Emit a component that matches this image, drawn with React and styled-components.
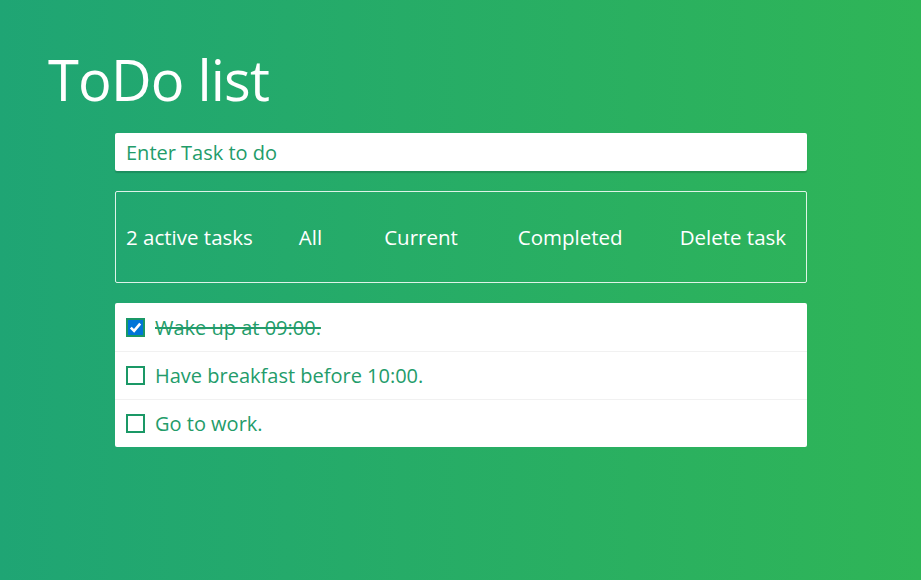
import React, { useState } from 'react';
import styled, { createGlobalStyle } from 'styled-components';

const GlobalStyle = createGlobalStyle`
  html, body {
    margin: 0;
    padding: 0;
  }
  body {
    min-height: 580px;
    background: linear-gradient(to right, #1fa574, #2fb557);
    font-family: "Open Sans", "Noto Sans", sans-serif;
  }
`;

const initialTasks = [
  { id: 1, text: 'Wake up at 09:00.', done: true },
  { id: 2, text: 'Have breakfast before 10:00.', done: false },
  { id: 3, text: 'Go to work.', done: false }
];

const App = () => {
  const [tasks, setTasks] = useState(initialTasks);
  const activeCount = tasks.filter(t => !t.done).length;

  const toggle = id => {
    setTasks(tasks.map(t => (t.id === id ? { ...t, done: !t.done } : t)));
  };

  return (
    <>
      <GlobalStyle />
      <SCPage>
        <SCTitle>ToDo list</SCTitle>
        <SCBody>
          <SCInput placeholder="Enter Task to do" />
          <SCFilterBar>
            <SCFilterItem>{activeCount} active tasks</SCFilterItem>
            <SCFilterItem $gap={46}>All</SCFilterItem>
            <SCFilterItem $gap={62}>Current</SCFilterItem>
            <SCFilterItem $gap={60}>Completed</SCFilterItem>
            <SCFilterItem $gap={57}>Delete task</SCFilterItem>
          </SCFilterBar>
          <SCList>
            {tasks.map(task => (
              <SCRow key={task.id}>
                <SCCheck $checked={task.done} onClick={() => toggle(task.id)}>
                  {task.done && (
                    <svg width="13" height="13" viewBox="0 0 13 13">
                      <path d="M1.8 6.6 L5.1 9.9 L11.2 2.6" fill="none" stroke="#fff" strokeWidth="2.6" />
                    </svg>
                  )}
                </SCCheck>
                <SCTaskText $done={task.done}>{task.text}</SCTaskText>
              </SCRow>
            ))}
          </SCList>
        </SCBody>
      </SCPage>
    </>
  );
};

const SCPage = styled.div`
  padding: 46px 48px;
`;

const SCTitle = styled.h1`
  margin: 0 0 20px 0;
  font-size: 56px;
  font-weight: 400;
  line-height: 1.2;
  color: #fff;
  letter-spacing: -0.8px;
`;

const SCBody = styled.div`
  width: 692px;
  margin-left: 67px;
  display: flex;
  flex-direction: column;
`;

const SCInput = styled.input`
  box-sizing: border-box;
  height: 38px;
  padding: 0 11px;
  border: none;
  border-radius: 2px;
  background: #fff;
  box-shadow: 0 2px 1px rgba(0, 0, 0, 0.15);
  font-family: inherit;
  font-size: 20px;
  color: #239c6a;
  outline: none;

  &::placeholder {
    color: #239c6a;
  }
`;

const SCFilterBar = styled.div`
  box-sizing: border-box;
  height: 92px;
  margin-top: 20px;
  padding: 0 10px;
  border: 1px solid rgba(255, 255, 255, 0.85);
  border-radius: 2px;
  display: flex;
  align-items: center;
`;

const SCFilterItem = styled.span`
  margin-left: ${p => p.$gap || 0}px;
  font-size: 20.5px;
  color: #fff;
  white-space: nowrap;
  cursor: pointer;
`;

const SCList = styled.div`
  margin-top: 20px;
  background: #fff;
  border-radius: 2px;
  display: flex;
  flex-direction: column;
`;

const SCRow = styled.div`
  box-sizing: border-box;
  height: 48px;
  padding: 0 11px;
  display: flex;
  align-items: center;
  gap: 10px;

  & + & {
    border-top: 1px solid #f1f1f1;
  }
`;

const SCCheck = styled.span`
  box-sizing: border-box;
  width: 19px;
  height: 19px;
  border: 2px solid #1a9866;
  background: ${p => (p.$checked ? '#0075d8' : '#fff')};
  display: flex;
  align-items: center;
  justify-content: center;
  cursor: pointer;
`;

const SCTaskText = styled.span`
  font-size: 20px;
  color: #239c6a;
  text-decoration: ${p => (p.$done ? 'line-through' : 'none')};
  text-decoration-thickness: 2px;
`;

export default App;
